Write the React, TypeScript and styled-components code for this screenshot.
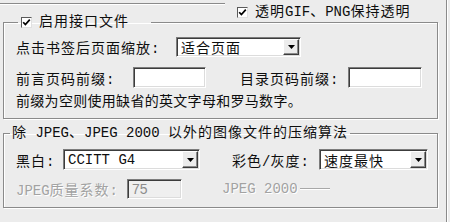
import React from 'react';
import styled, { createGlobalStyle } from 'styled-components';

const GlobalStyle = createGlobalStyle`
  html, body {
    margin: 0;
    padding: 0;
    background: #ececec;
  }
  #root {
    width: 450px;
    height: 222px;
    overflow: hidden;
  }
`;

const Panel = styled.div`
  width: 446px;
  height: 222px;
  border-right: 1px solid #8a8a8a;
  box-shadow: 1px 0 0 #fff;
  font-family: 'Liberation Mono', 'Noto Sans CJK SC', monospace;
  font-size: 14px;
  letter-spacing: 1px;
  color: #0e0e0e;
`;

// latin runs keep their natural width, only the han glyphs get spaced out
const Latin = styled.span`
  letter-spacing: 0;
`;

const TopRow = styled.div`
  display: flex;
  height: 15px;
`;

const TopRule = styled.div`
  width: 225px;
  height: 0;
  margin-top: 3px;
  border-top: 1px solid #8a8a8a;
  border-bottom: 1px solid #fff;
`;

const CheckItem = styled.label<{ $ml?: number; $pt?: number }>`
  display: flex;
  align-items: center;
  gap: 7px;
  margin-left: ${(p) => p.$ml ?? 0}px;
  padding-top: ${(p) => p.$pt ?? 0}px;
  line-height: 14px;
  height: 14px;
  white-space: nowrap;
`;

const CheckBox = styled.span`
  width: 9px;
  height: 9px;
  flex: none;
  display: inline-flex;
  align-items: center;
  justify-content: center;
  background: #fff;
  border: 1px solid;
  border-color: #5a5a5a #e0e0e0 #e0e0e0 #5a5a5a;
`;

const Group = styled.fieldset<{ $pt: number; $pb: number; $mt?: number }>`
  box-sizing: border-box;
  width: 435px;
  margin: ${(p) => p.$mt ?? 0}px 0 0 3px;
  padding: ${(p) => p.$pt}px 0 ${(p) => p.$pb}px 0;
  min-width: 0;
  border: 1px solid #8a8a8a;
  box-shadow: inset 1px 1px 0 #fff, 1px 1px 0 #fff;
`;

const Legend = styled.legend<{ $ml: number; $pl: number; $pr: number }>`
  margin-left: ${(p) => p.$ml}px;
  padding: 0 ${(p) => p.$pr}px 0 ${(p) => p.$pl}px;
  line-height: 14px;
  height: 14px;
  white-space: nowrap;
`;

const Row = styled.div<{ $h: number; $mt?: number }>`
  display: flex;
  align-items: center;
  height: ${(p) => p.$h}px;
  margin: ${(p) => p.$mt ?? 0}px 0 0 12px;
  white-space: nowrap;
`;

const Label = styled.span<{ $w: number; $ml?: number; $off?: boolean }>`
  width: ${(p) => p.$w}px;
  margin-left: ${(p) => p.$ml ?? 0}px;
  flex: none;
  color: ${(p) => (p.$off ? '#a2a2a2' : 'inherit')};
  text-shadow: ${(p) => (p.$off ? '1px 1px 0 #fff' : 'none')};
`;

const Note = styled.div`
  margin: 6px 0 0 12px;
  line-height: 16px;
  height: 16px;
  letter-spacing: 0.3px;
  white-space: nowrap;
`;

const Sunken = styled.div<{ $w: number; $h: number; $off?: boolean }>`
  box-sizing: border-box;
  width: ${(p) => p.$w}px;
  height: ${(p) => p.$h}px;
  flex: none;
  display: flex;
  align-items: stretch;
  padding: 1px;
  background: ${(p) => (p.$off ? '#efefef' : '#fff')};
  border: 1px solid;
  border-color: #7c7c7c #fff #fff #7c7c7c;
  box-shadow: inset 1px 1px 0 #3c3c3c, inset -1px -1px 0 #dcdcdc;
  color: ${(p) => (p.$off ? '#8c8c8c' : 'inherit')};
`;

const FieldText = styled.span<{ $sans?: boolean }>`
  flex: 1;
  display: flex;
  align-items: center;
  padding-left: 3px;
  font-family: ${(p) =>
    p.$sans ? "'Liberation Sans', Arial, sans-serif" : 'inherit'};
`;

const DropButton = styled.span`
  width: 14px;
  flex: none;
  display: flex;
  align-items: center;
  justify-content: center;
  background: #ececec;
  border: 1px solid;
  border-color: #fff #3c3c3c #3c3c3c #fff;
  box-shadow: inset -1px -1px 0 #8a8a8a;
`;

const SubTitle = styled.div`
  display: flex;
  align-items: center;
  margin-left: 40px;
  color: #a2a2a2;
  text-shadow: 1px 1px 0 #fff;
`;

const SubRule = styled.span`
  width: 30px;
  height: 0;
  margin-left: 2px;
  border-top: 1px solid #a8a8a8;
  border-bottom: 1px solid #fff;
`;

const Tick = () => (
  <svg width="9" height="9" viewBox="0 0 9 9">
    <path d="M1.2 4.2 L3.4 6.6 L7.8 1.6" fill="none" stroke="#000" strokeWidth="1.7" />
  </svg>
);

const Check = ({ children }: { children: React.ReactNode }) => (
  <>
    <CheckBox>
      <Tick />
    </CheckBox>
    <span>{children}</span>
  </>
);

const Arrow = () => (
  <svg width="7" height="4" viewBox="0 0 7 4">
    <polygon points="0,0 7,0 3.5,4" fill="#000" />
  </svg>
);

const Combo = ({ w, h, children }: { w: number; h: number; children: React.ReactNode }) => (
  <Sunken $w={w} $h={h}>
    <FieldText>{children}</FieldText>
    <DropButton>
      <Arrow />
    </DropButton>
  </Sunken>
);

export default function App() {
  return (
    <>
      <GlobalStyle />
      <Panel>
        <TopRow>
          <TopRule />
          <CheckItem $ml={12} $pt={5}>
            <Check>
              透明<Latin>GIF</Latin>、<Latin>PNG</Latin>保持透明
            </Check>
          </CheckItem>
        </TopRow>

        <Group $pt={8} $pb={8}>
          <Legend $ml={14} $pl={3} $pr={22}>
            <CheckItem>
              <Check>启用接口文件</Check>
            </CheckItem>
          </Legend>
          <Row $h={20}>
            <Label $w={160}>点击书签后页面缩放:</Label>
            <Combo w={125} h={20}>适合页面</Combo>
          </Row>
          <Row $h={21} $mt={10}>
            <Label $w={117}>前言页码前缀:</Label>
            <Sunken $w={73} $h={21} />
            <Label $w={108} $ml={34}>目录页码前缀:</Label>
            <Sunken $w={74} $h={21} />
          </Row>
          <Note>前缀为空则使用缺省的英文字母和罗马数字。</Note>
        </Group>

        <Group $pt={9} $pb={8} $mt={7}>
          <Legend $ml={6} $pl={2} $pr={2}>
            除<Latin> JPEG</Latin>、<Latin>JPEG 2000 </Latin>以外的图像文件的压缩算法
          </Legend>
          <Row $h={21}>
            <Label $w={47}>黑白:</Label>
            <Combo w={137} h={21}>
              <Latin>CCITT G4</Latin>
            </Combo>
            <Label $w={87} $ml={32}>
              彩色<Latin>/</Latin>灰度:
            </Label>
            <Combo w={109} h={21}>速度最快</Combo>
          </Row>
          <Row $h={20} $mt={9}>
            <Label $w={111} $off>
              <Latin>JPEG</Latin>质量系数:
            </Label>
            <Sunken $w={55} $h={20} $off>
              <FieldText $sans>
                <Latin>75</Latin>
              </FieldText>
            </Sunken>
            <SubTitle>
              <Latin>JPEG 2000</Latin>
              <SubRule />
            </SubTitle>
          </Row>
        </Group>
      </Panel>
    </>
  );
}
